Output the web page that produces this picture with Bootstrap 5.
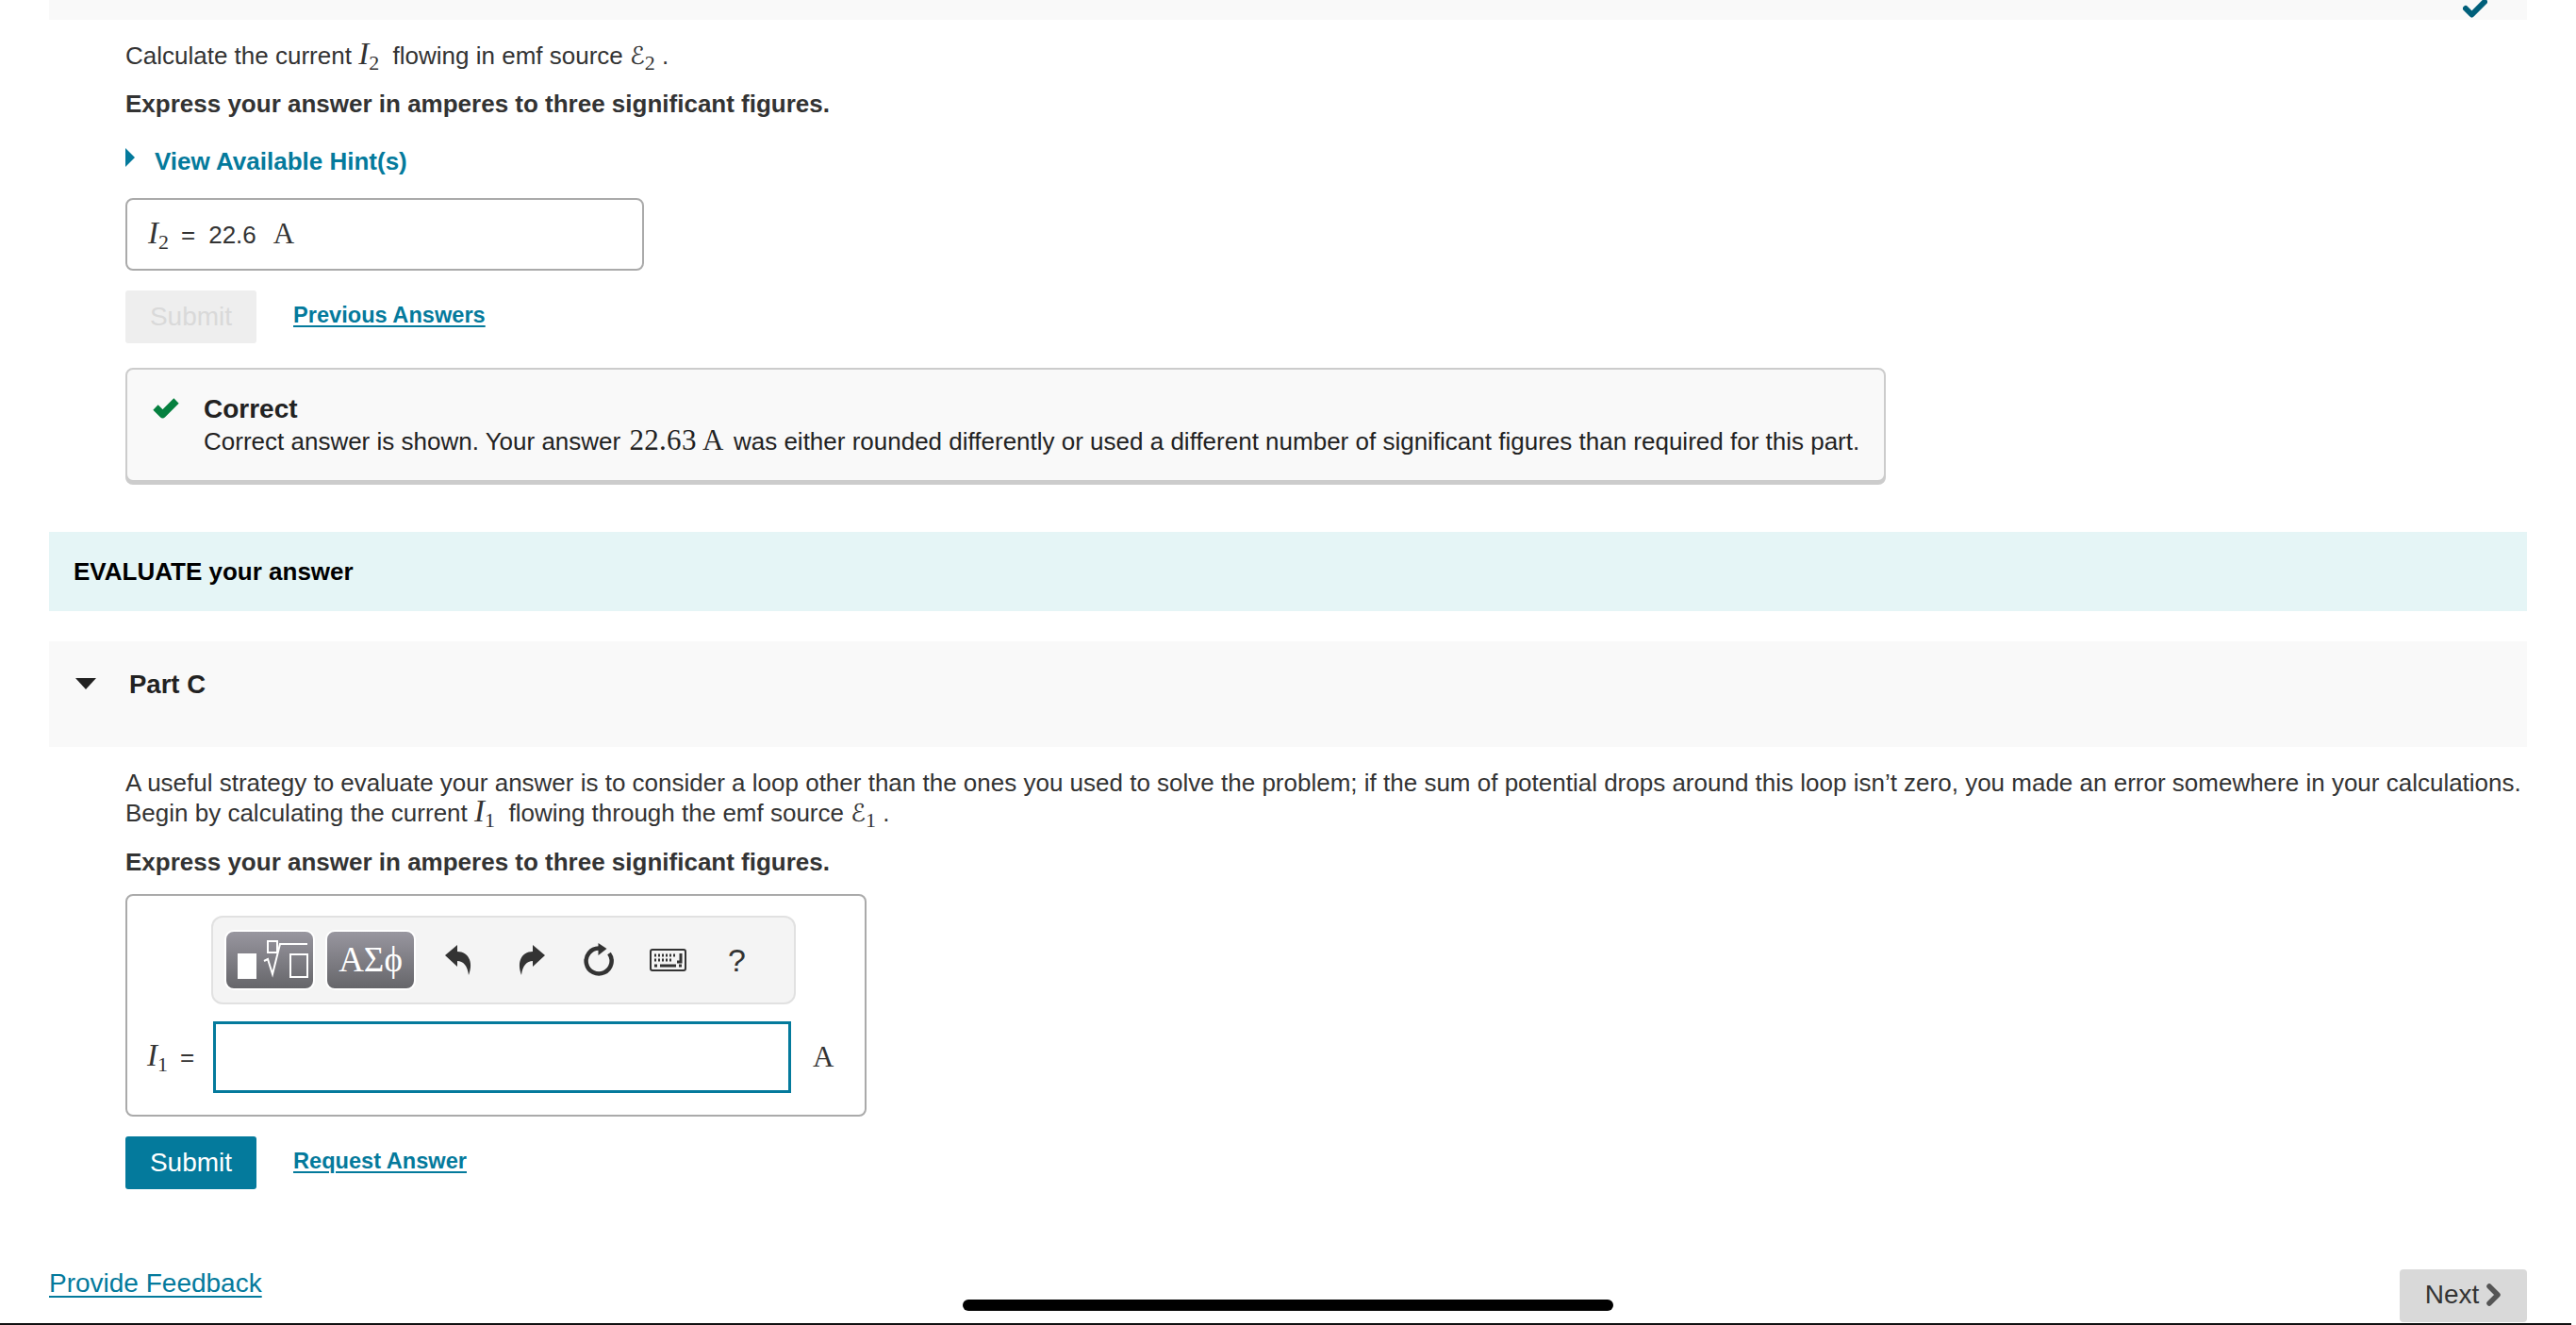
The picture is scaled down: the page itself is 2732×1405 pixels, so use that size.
<!DOCTYPE html>
<html lang="en">
<head>
  <meta charset="UTF-8" />
  <meta name="viewport" content="width=device-width, initial-scale=1.0" />
  <title>Part C</title>
  <link href="https://cdn.jsdelivr.net/npm/bootstrap@5.3.0/dist/css/bootstrap.min.css" rel="stylesheet" />
  <style>
    html, body { height: 1405px; overflow: hidden; }
    body { font-family: "Liberation Sans", Arial, sans-serif; font-size: 26px; line-height: 34px; color: #333; background: #fff; position: relative; }
    a { color: #047a9c; }
    .page-wrap { padding: 0 52px; height: 1404px; display: flex; flex-direction: column; }
    .top-band { height: 21px; background: #f9f9f9; position: relative; }
    .top-check { position: absolute; right: 42px; top: 0; width: 26px; height: 19px; display: block; }
    .part-body { padding-left: 81px; }
    .m-var { font-family: "Liberation Serif", serif; font-style: italic; font-size: 33px; line-height: 0; }
    .m-script { font-family: "DejaVu Sans", serif; font-size: 26px; line-height: 0; }
    .m-sub { font-family: "Liberation Serif", serif; font-size: 22px; position: relative; top: 6px; line-height: 0; }
    .m-roman { font-family: "Liberation Serif", serif; font-size: 31px; line-height: 0; }
    .m-eq { margin: 0 14px 0 13px; }
    .m-gap { margin-left: 18px; }
    .m-num { margin: 0 3px 0 2px; letter-spacing: .3px; }
    .q-line { margin-top: 21px; height: 34px; }
    .strong-line { font-weight: 700; height: 34px; }
    .strong-first { margin-top: 17px; }
    .hint-row { margin-top: 27px; height: 34px; font-weight: 700; color: #047a9c; }
    .hint-tri { width: 0; height: 0; border-left: 10px solid #047a9c; border-top: 10px solid transparent; border-bottom: 10px solid transparent; margin-right: 21px; margin-top: -8px; }
    .answer-box { margin-top: 22px; width: 550px; height: 77px; border: 2px solid #aaa; border-radius: 8px; padding-left: 22px; }
    .action-row { margin-top: 21px; height: 56px; }
    .btn.sub-btn { width: 139px; height: 56px; padding: 0; font-size: 28px; border-radius: 3px; border: 0; line-height: 56px; background: #047a9c; color: #fff; }
    .btn.sub-btn:disabled { background: #eee; color: #d9d9d9; opacity: 1; }
    .act-link { margin-left: 39px; margin-top: -4px; font-size: 23.6px; font-weight: 700; text-decoration-thickness: 2px; text-underline-offset: 3px; }
    .correct-box { margin-top: 26px; width: 1867px; height: 121px; background: #f9f9f9; border: 2px solid #ccc; border-radius: 8px; box-shadow: 0 3px 0 #ccc; padding: 25px 0 0 27px; }
    .correct-check { width: 30px; height: 23px; margin-right: 25px; margin-top: 4px; margin-left: -1px; flex: none; }
    .correct-title { font-size: 28px; font-weight: 700; color: #222; }
    .correct-text { color: #222; }
    .eval-band { margin-top: 53px; height: 84px; background: #e5f5f6; padding-left: 26px; font-weight: 700; color: #000; line-height: 84px; font-size: 26px; }
    .part-band { margin-top: 32px; height: 112px; background: #f9f9f9; padding: 29px 0 0 28px; font-size: 27.5px; font-weight: 700; color: #222; }
    .part-tri { width: 0; height: 0; border-top: 12px solid #222; border-left: 11px solid transparent; border-right: 11px solid transparent; margin-right: 35px; margin-top: 10px; }
    .desc-para { margin-top: 22px; margin-bottom: 19px; line-height: 32px; }
    .math-box { margin-top: 17px; width: 786px; height: 236px; border: 2px solid #aaa; border-radius: 8px; padding: 21px 0 0 21px; }
    .tool-bar { margin-left: 68px; width: 620px; height: 94px; background: #f4f4f4; border: 2px solid #e1e1e1; border-radius: 12px; padding: 13px 0 13px 12px; }
    .tool-btn { width: 96px; height: 64px; border-radius: 10px; border: 2px solid #fff; background: linear-gradient(#98969f, #66666a); color: #fff; font-family: "Liberation Serif", serif; font-size: 37px; margin-right: 11px; flex: none; }
    .tool-ic { flex: none; display: block; }
    .ic-undo { margin-left: 20px; }
    .ic-redo { margin-left: 50px; }
    .ic-reset { margin-left: 41px; }
    .ic-keys { margin-left: 38px; }
    .ic-help { margin-left: 44px; font-size: 34px; }
    .math-row { margin-top: 18px; height: 76px; }
    .math-label { width: 70px; flex: none; white-space: nowrap; }
    .math-input { width: 613px; height: 76px; flex: none; border: 3px solid #047a9c; border-radius: 0; background: #fff; }
    .math-input:focus { outline: 0; box-shadow: none; border-color: #047a9c; }
    .math-unit { margin-left: 23px; }
    .math-label .m-eq { margin: 0 0 0 13px; }
    .foot-row { margin-top: auto; height: 56px; margin-bottom: 2px; }
    .feedback-link { font-size: 28px; text-decoration-thickness: 2px; text-underline-offset: 4px; margin-top: -2px; }
    .btn.next-btn { width: 135px; height: 56px; padding: 0 0 3px 0; background: #d9d9d9; border: 0; border-radius: 4px; color: #333; font-size: 28px; }
    .bottom-line { position: absolute; left: 0; bottom: 0; width: 2727px; height: 2px; background: #111; }
    .home-bar { position: absolute; left: 1021px; top: 1378px; width: 690px; height: 12px; background: #000; border-radius: 6px; }
  </style>
</head>
<body>
  <div class="page-wrap">
    <div class="top-band">
      <svg class="top-check" viewBox="0 0 26 19"><path d="M3 9l6.500 6.500L23 2" fill="none" stroke="#005f7a" stroke-width="6" stroke-linecap="round" stroke-linejoin="round"/></svg>
    </div>

    <div class="part-body">
      <div class="q-line">Calculate the current <span class="m-var">I</span><span class="m-sub">2</span> &nbsp;flowing in emf source <span class="m-script">ℰ</span><span class="m-sub">2</span> .</div>
      <div class="strong-line strong-first">Express your answer in amperes to three significant figures.</div>
      <div class="hint-row d-flex align-items-center"><span class="hint-tri"></span>View Available Hint(s)</div>

      <div class="answer-box d-flex align-items-center">
        <span><span class="m-var">I</span><span class="m-sub">2</span><span class="m-eq">=</span>22.6<span class="m-roman m-gap">A</span></span>
      </div>

      <div class="action-row d-flex align-items-center">
        <button class="btn sub-btn" disabled>Submit</button>
        <a class="act-link" href="#">Previous Answers</a>
      </div>

      <div class="correct-box d-flex">
        <svg class="correct-check" viewBox="0 0 30 23"><path d="M4 11l7.500 7.500L26 4" fill="none" stroke="#05803f" stroke-width="7.500" stroke-linejoin="round"/></svg>
        <div>
          <div class="correct-title">Correct</div>
          <div class="correct-text">Correct answer is shown. Your answer <span class="m-roman m-num">22.63 A</span> was either rounded differently or used a different number of significant figures than required for this part.</div>
        </div>
      </div>
    </div>

    <div class="eval-band">EVALUATE your answer</div>

    <div class="part-band d-flex align-items-start">
      <span class="part-tri"></span>
      <span>Part C</span>
    </div>

    <div class="part-body">
      <div class="desc-para">A useful strategy to evaluate your answer is to consider a loop other than the ones you used to solve the problem; if the sum of potential drops around this loop isn’t zero, you made an error somewhere in your calculations. Begin by calculating the current <span class="m-var">I</span><span class="m-sub">1</span> &nbsp;flowing through the emf source <span class="m-script">ℰ</span><span class="m-sub">1</span> .</div>
      <div class="strong-line">Express your answer in amperes to three significant figures.</div>

      <div class="math-box">
        <div class="tool-bar d-flex">
          <div class="tool-btn d-flex align-items-center justify-content-center">
            <svg width="92" height="60" viewBox="0 0 92 60">
              <rect x="12" y="23" width="20" height="27" fill="#fff"/>
              <rect x="44" y="10" width="10" height="12" fill="none" stroke="#fff" stroke-width="2"/>
              <path d="M40 31l4-2 5 16 8-32h29" fill="none" stroke="#fff" stroke-width="2"/>
              <rect x="68" y="24" width="18" height="24" fill="none" stroke="#fff" stroke-width="2"/>
            </svg>
          </div>
          <div class="tool-btn d-flex align-items-center justify-content-center">ΑΣϕ</div>
          <div class="d-flex align-items-center">
            <svg class="tool-ic ic-undo" width="28" height="32" viewBox="0 0 28 32"><path d="M0 11L13 0v7c10 0 18 9 12 25-1-10-6-15-12-15v6z" fill="#333"/></svg>
            <svg class="tool-ic ic-redo" width="28" height="32" viewBox="0 0 28 32"><path d="M28 11L15 0v7C5 7-3 16 3 32c1-10 6-15 12-15v6z" fill="#333"/></svg>
            <svg class="tool-ic ic-reset" width="32" height="36" viewBox="0 0 32 36"><path d="M27 11A13.500 13.500 0 1 1 16 5.500" fill="none" stroke="#333" stroke-width="4.500"/><path d="M15.500 0l9 6-9 7z" fill="#333"/></svg>
            <svg class="tool-ic ic-keys" width="39" height="24" viewBox="0 0 39 24"><rect x="1" y="1" width="37" height="22" rx="2" fill="#f4f4f4" stroke="#333" stroke-width="2"/><path d="M5 7h2m2 0h2m2 0h2m2 0h2m2 0h2m2 0h2M5 12h2m2 0h2m2 0h2m2 0h2m2 0h2" stroke="#333" stroke-width="3"/><path d="M11 18h17M5 18h3M31 18h3M33 5v9H29" fill="none" stroke="#333" stroke-width="3"/></svg>
            <span class="ic-help">?</span>
          </div>
        </div>

        <div class="math-row d-flex align-items-center">
          <span class="math-label"><span class="m-var">I</span><span class="m-sub">1</span><span class="m-eq">=</span></span>
          <input class="form-control math-input" type="text" aria-label="I1" />
          <span class="m-roman math-unit">A</span>
        </div>
      </div>

      <div class="action-row d-flex align-items-center">
        <button class="btn sub-btn">Submit</button>
        <a class="act-link" href="#">Request Answer</a>
      </div>
    </div>

    <div class="foot-row d-flex justify-content-between">
      <a class="feedback-link" href="#">Provide Feedback</a>
      <button class="btn next-btn d-flex align-items-center justify-content-center">Next
        <svg class="ms-2" width="16" height="24" viewBox="0 0 16 24"><path d="M3 3l9 9-9 9" fill="none" stroke="#555" stroke-width="5.500" stroke-linejoin="round" stroke-linecap="round"/></svg>
      </button>
    </div>
  </div>

  <div class="home-bar"></div>
  <div class="bottom-line"></div>
</body>
</html>
